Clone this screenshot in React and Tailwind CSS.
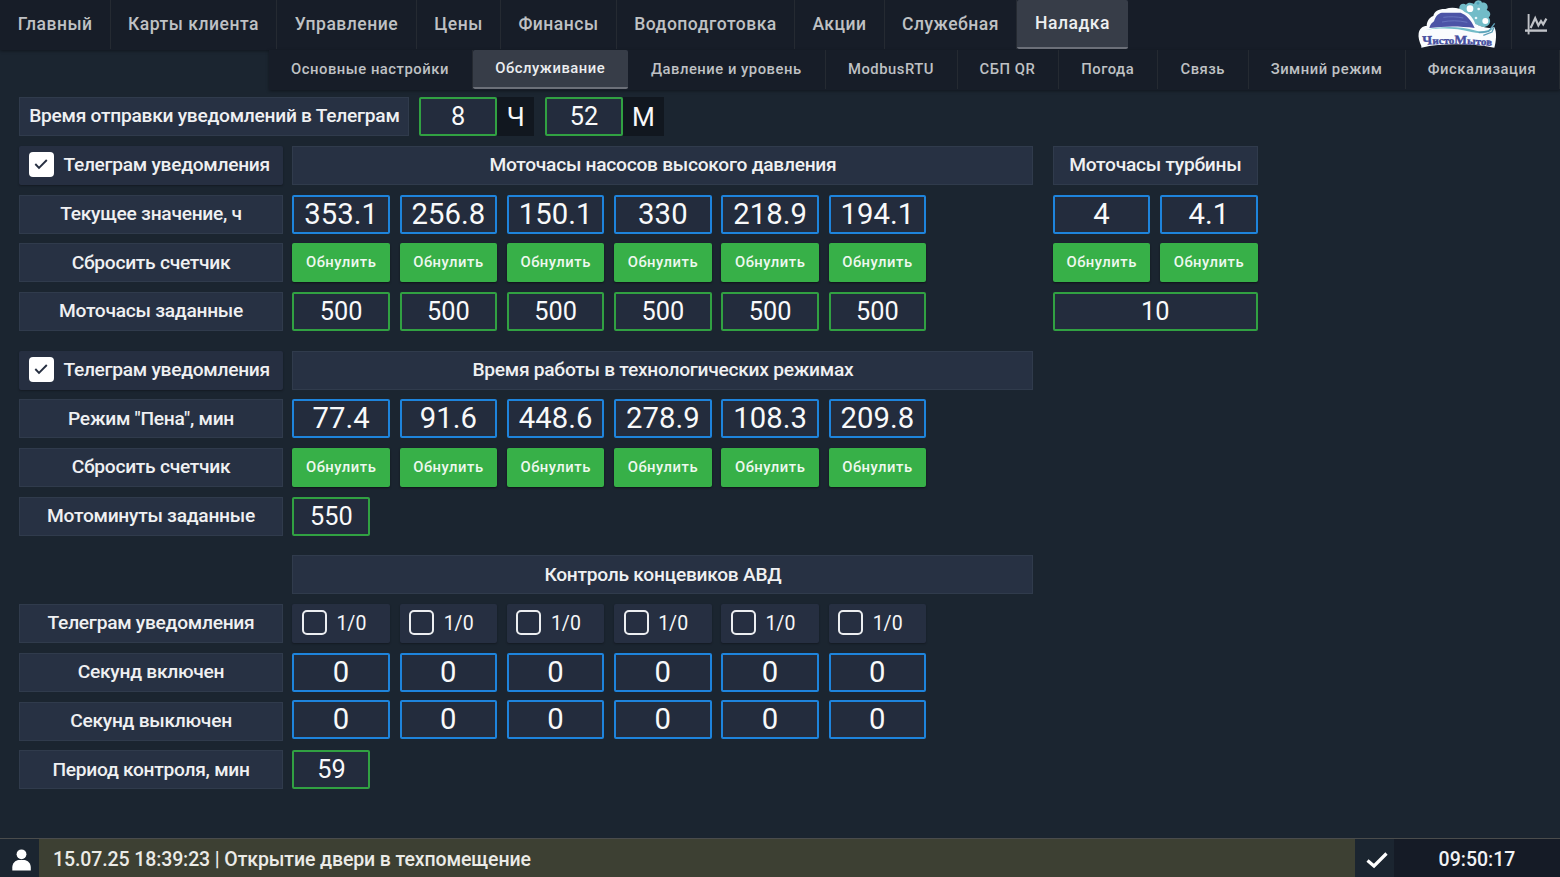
import React from "react";

const mainTabs = [
  { label: "Главный", width: "w-[110.5px]" },
  { label: "Карты клиента", width: "w-[166px]" },
  { label: "Управление", width: "w-[140px]" },
  { label: "Цены", width: "w-[84px]" },
  { label: "Финансы", width: "w-[116px]" },
  { label: "Водоподготовка", width: "w-[178px]" },
  { label: "Акции", width: "w-[90px]" },
  { label: "Служебная", width: "w-[132px]" },
  { label: "Наладка", width: "w-[111px]", active: true },
];

const subTabs = [
  { label: "Основные настройки", width: "w-[204px]" },
  { label: "Обслуживание", width: "w-[155.5px]", active: true },
  { label: "Давление и уровень", width: "w-[197.5px]" },
  { label: "ModbusRTU", width: "w-[132px]" },
  { label: "СБП QR", width: "w-[101px]" },
  { label: "Погода", width: "w-[99.5px]" },
  { label: "Связь", width: "w-[90.5px]" },
  { label: "Зимний режим", width: "w-[157px]" },
  { label: "Фискализация", width: "w-[154px]" },
];

const six = [0, 1, 2, 3, 4, 5];

function Tab({ tab, sub }) {
  const size = sub ? "text-[14.8px] tracking-[0.52px]" : "text-[17.55px] tracking-[0.5px] pl-[1px]";
  const tone = tab.active
    ? "border-b-2 border-[#6c7079] bg-[#373d48] text-[#eceef0] rounded-[2px]"
    : "border-r border-[#252a32] text-[#bfc1c4]";
  return (
    <button className={`h-full shrink-0 whitespace-nowrap text-center font-medium ${tab.width} ${size} ${tone}`}>
      {tab.label}
    </button>
  );
}

function Logo() {
  return (
    <svg className="h-[50px] w-[95px] shrink-0" viewBox="0 0 285 150">
      <path d="M148 28 C146 12 160 8 168 14 C176 4 188 10 192 12 C194 0 212 -4 216 8 C230 6 238 20 230 30 C242 34 244 46 236 52 C246 66 238 78 222 82 L190 72 Z" fill="#72bcc8" />
      <path d="M34 138 C28 126 24 112 26 100 C28 86 38 78 50 78 C50 64 58 52 70 48 C72 34 88 26 106 27 C126 20 152 24 164 36 C178 40 190 54 196 72 C216 82 240 88 252 80 C262 94 258 126 253 143 C214 136 178 133 140 133 C100 133 66 136 34 143 Z" fill="#fafcfe" />
      <path d="M58 84 C60 74 66 68 72 64 C76 50 84 40 96 38 L152 38 C168 44 184 60 194 84 C150 78 104 78 58 84 Z" fill="#4c54a6" />
      <path d="M100 52 C120 49 140 50 160 54 M96 66 C120 61 146 61 172 67" stroke="#6c79c2" strokeWidth="2.5" fill="none" />
      <path d="M48 90 C86 78 150 78 190 90 C214 98 232 92 250 84 C238 102 208 102 184 96 C140 84 90 83 48 90 Z" fill="#72bcc8" />
      <path d="M206 98 L236 94 L254 70 M220 106 L246 96 L252 82" stroke="#5b9fb8" strokeWidth="4" fill="none" />
      <circle cx="180" cy="26" r="10" fill="#fff" />
      <circle cx="206" cy="27" r="4" fill="#e8f6fa" />
      <circle cx="198" cy="54" r="4" fill="#e8f6fa" />
      <circle cx="226" cy="63" r="9" fill="#fff" />
      <circle cx="204" cy="10" r="4" fill="#4e9fb8" />
      <path id="logo-arc" d="M38 134 Q140 128 252 138" fill="none" />
      <text fill="#454d9e" stroke="#454d9e" strokeWidth="1.2" fontFamily="Liberation Serif, serif" fontWeight="700" fontSize="31">
        <textPath href="#logo-arc" textLength="208" lengthAdjust="spacingAndGlyphs">
          <tspan fontSize="38">Ч</tspan>исто<tspan fontSize="38">М</tspan>ытов
        </textPath>
      </text>
    </svg>
  );
}

function Label({ children, className = "" }) {
  return (
    <div className={`flex h-[39px] shrink-0 items-center justify-center whitespace-nowrap border border-[#303b4c] bg-[#273143] text-[19.2px] font-medium tracking-[-0.27px] text-[#eff0f2] ${className}`}>
      {children}
    </div>
  );
}

function Value({ children }) {
  return (
    <div className="flex h-[39px] w-[97.5px] shrink-0 items-center justify-center rounded-[2px] border-2 border-[#1e84dc] bg-[#232c3d] text-[29.25px] leading-none tracking-[0.1px] text-[#f8f9fa]">
      {children}
    </div>
  );
}

function Field({ children, className = "w-[78px]" }) {
  return (
    <div className={`flex h-[39px] shrink-0 items-center justify-center rounded-[2px] border-2 border-[#31a142] bg-[#232c3d] text-[25.35px] leading-none text-[#f8f9fa] ${className}`}>
      {children}
    </div>
  );
}

function Reset() {
  return (
    <button className="h-[39px] w-[97.5px] shrink-0 rounded-[2px] bg-[#37b048] pb-[1px] text-center text-[14.8px] font-medium tracking-[0.53px] text-[#eef8ef] shadow-[0_1px_2px_rgba(0,0,0,0.5)]">
      Обнулить
    </button>
  );
}

function NotifyToggle() {
  return (
    <div className="flex h-[39px] w-[263.25px] shrink-0 items-center gap-[9.5px] whitespace-nowrap rounded-[2px] bg-[#262f41] pl-[9.5px] text-[19.2px] font-medium tracking-[-0.29px] text-[#eff0f2] shadow-[0_1px_2px_rgba(0,0,0,0.3)]">
      <span className="mb-[2px] flex h-[25px] w-[25px] items-center justify-center rounded-[4px] bg-white">
        <svg className="h-[14px] w-[16px]" viewBox="0 0 16 14">
          <path d="M2.3 7 L6 10.8 L13.8 3" stroke="#262f41" strokeWidth="1.9" fill="none" />
        </svg>
      </span>
      Телеграм уведомления
    </div>
  );
}

function BitToggle() {
  return (
    <div className="flex h-[39px] w-[97.5px] shrink-0 items-center gap-[9.5px] rounded-[2px] bg-[#262f41] pl-[9.5px] text-[19.5px] text-[#f6f7f8] shadow-[0_1px_2px_rgba(0,0,0,0.3)]">
      <span className="mb-[2px] h-[25px] w-[25px] rounded-[5px] border-2 border-[#eceef0]" />
      1/0
    </div>
  );
}

function Row({ children, className = "" }) {
  return <div className={`flex h-[39px] gap-[9.75px] ${className}`}>{children}</div>;
}

function ValueRow({ label, values }) {
  return (
    <Row>
      <Label className="w-[263.25px]">{label}</Label>
      {values.map((v, i) => <Value key={i}>{v}</Value>)}
    </Row>
  );
}

function ResetRow() {
  return (
    <Row>
      <Label className="w-[263.25px]">Сбросить счетчик</Label>
      {six.map((i) => <Reset key={i} />)}
    </Row>
  );
}

export default function App() {
  return (
    <div className="flex h-[877px] w-[1560px] flex-col overflow-hidden bg-[#1b2530] font-['Roboto',sans-serif]">
      <header className="shrink-0">
        <nav className="flex h-[50px] bg-[#171d28] pb-[1px] shadow-[0_1px_3px_rgba(0,0,0,0.4)]">
          {mainTabs.map((t) => <Tab key={t.label} tab={t} />)}
          <div className="ml-auto flex">
            <Logo />
            <div className="ml-[6px] flex h-full w-[49px] items-center justify-center border-l border-[#252a32]">
              <svg className="h-[22px] w-[24px]" viewBox="0 0 24 22" fill="none" stroke="#c0c2c7">
                <path d="M4.6 0 V20.4" strokeWidth="1.9" />
                <path d="M1 16.6 H23" strokeWidth="2.4" />
                <path d="M6.6 14 L11.2 4.2 L14.4 11.4 L17 7 L19.2 10.4 L22.4 4.6" strokeWidth="2.2" />
              </svg>
            </div>
          </div>
        </nav>
        <nav className="ml-[268.5px] flex h-[39.5px] bg-[#171d28] pb-[1px] shadow-[0_1px_3px_rgba(0,0,0,0.4)]">
          {subTabs.map((t) => <Tab key={t.label} tab={t} sub />)}
        </nav>
      </header>

      <main className="flex flex-1 flex-col gap-[9.75px] pl-[19.4px] pt-[7.7px]">
        <Row>
          <Label className="w-[390px]">Время отправки уведомлений в Телеграм</Label>
          <div className="flex">
            <Field>8</Field>
            <div className="flex w-[37px] items-center justify-center bg-[#11171f] pt-[1px] text-[26.2px] leading-none text-[#f8f9fa]">Ч</div>
          </div>
          <div className="ml-px flex">
            <Field>52</Field>
            <div className="flex w-[41px] items-center justify-center bg-[#11171f] pt-[1px] text-[26.2px] leading-none text-[#f8f9fa]">М</div>
          </div>
        </Row>

        <div className="flex gap-[19.5px]">
          <section className="flex w-[1014px] flex-col gap-[9.75px]">
            <Row>
              <NotifyToggle />
              <Label className="w-[741px]">Моточасы насосов высокого давления</Label>
            </Row>
            <ValueRow label="Текущее значение, ч" values={["353.1", "256.8", "150.1", "330", "218.9", "194.1"]} />
            <ResetRow />
            <Row>
              <Label className="w-[263.25px]">Моточасы заданные</Label>
              {six.map((i) => <Field key={i} className="w-[97.5px]">500</Field>)}
            </Row>
          </section>
          <section className="flex w-[204.75px] flex-col gap-[9.75px]">
            <Label className="w-full">Моточасы турбины</Label>
            <Row><Value>4</Value><Value>4.1</Value></Row>
            <Row><Reset /><Reset /></Row>
            <Field className="w-full">10</Field>
          </section>
        </div>

        <section className="mt-[9.75px] flex flex-col gap-[9.75px]">
          <Row>
            <NotifyToggle />
            <Label className="w-[741px]">Время работы в технологических режимах</Label>
          </Row>
          <ValueRow label={'Режим "Пена", мин'} values={["77.4", "91.6", "448.6", "278.9", "108.3", "209.8"]} />
          <ResetRow />
          <Row>
            <Label className="w-[263.25px]">Мотоминуты заданные</Label>
            <Field>550</Field>
          </Row>
        </section>

        <section className="mt-[9.75px] flex flex-col gap-[9.75px]">
          <Row className="pl-[273px]">
            <Label className="w-[741px]">Контроль концевиков АВД</Label>
          </Row>
          <Row>
            <Label className="w-[263.25px]">Телеграм уведомления</Label>
            {six.map((i) => <BitToggle key={i} />)}
          </Row>
          <ValueRow label="Секунд включен" values={["0", "0", "0", "0", "0", "0"]} />
          <Row>
            <Label className="w-[263.25px]">Секунд выключен</Label>
            {six.map((i) => <div key={i} className="-mt-[2px]"><Value>0</Value></div>)}
          </Row>
          <Row>
            <Label className="w-[263.25px]">Период контроля, мин</Label>
            <Field>59</Field>
          </Row>
        </section>
      </main>

      <footer className="flex h-[39px] shrink-0 border-t border-[#4a4c4c] bg-[#1b2530] text-[#f1f2f4]">
        <div className="flex w-[39px] items-center pl-[12px] pt-[3px]">
          <svg className="h-[22px] w-[19px]" viewBox="0 0 19 22" fill="#fff">
            <circle cx="9.5" cy="5.3" r="4.9" />
            <path d="M0.3 21.5 V18.5 C0.3 14 3.6 11.3 6.5 11 H12.5 C15.4 11.3 18.8 14 18.8 18.5 V21.5 Z" />
          </svg>
        </div>
        <div className="flex w-[1316px] items-center bg-[#3d4033] pl-[14px] pt-[3px] text-[19.5px] font-medium tracking-[-0.11px] text-[#ebebe7]">
          15.07.25 18:39:23 | Открытие двери в техпомещение
        </div>
        <div className="flex w-[39px] items-center justify-center pl-[4px] pt-[3px]">
          <svg className="h-[18px] w-[22px]" viewBox="0 0 22 18">
            <path d="M1.5 9.5 L8 15 L20.5 2.5" stroke="#fff" strokeWidth="3.2" fill="none" />
          </svg>
        </div>
        <div className="flex flex-1 items-center justify-center bg-[#151b26] pt-[3px] text-[19.5px] font-medium">09:50:17</div>
      </footer>
    </div>
  );
}
